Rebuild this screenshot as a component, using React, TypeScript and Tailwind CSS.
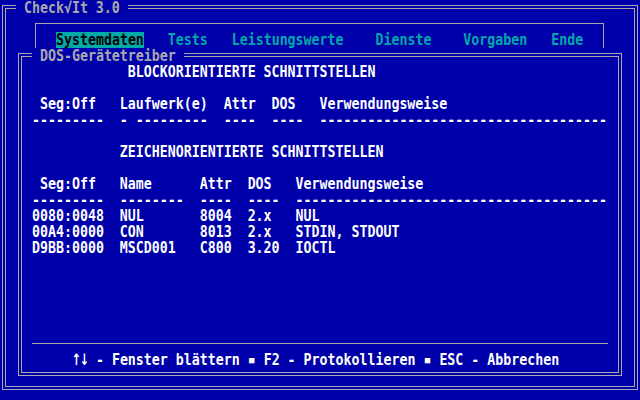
import React from "react";

function Row({ children, className = "" }: { children?: React.ReactNode; className?: string }) {
  return (
    <div className={"h-4 leading-4 whitespace-pre " + className}>
      <span className="inline-block scale-y-[1.13]">{children}</span>
    </div>
  );
}

function Blank() {
  return <div className="h-4" />;
}

function Arrow({ c }: { c: string }) {
  return (
    <span className="inline-flex w-2 h-4 justify-center items-center align-top">
      <span className="inline-block font-['DejaVu_Sans',sans-serif] text-[15px] leading-4 scale-x-[0.75] scale-y-[1.05]">{c}</span>
    </span>
  );
}

function Sq() {
  return (
    <span className="inline-flex w-2 h-4 justify-center items-center align-top">
      <span className="inline-block text-[9px] leading-4">■</span>
    </span>
  );
}

export default function App() {
  return (
    <div className="w-[640px] h-[400px] bg-[#0000aa] overflow-hidden pt-[5px] pl-[2px] font-['DejaVu_Sans_Mono',monospace] text-[13.288px] leading-4 font-bold text-white">
      <div className="relative w-[636px] h-[385px] border-4 border-double border-[#aaaaaa]">
        <div className="absolute left-[10px] -top-[9px] h-4 leading-4 whitespace-pre bg-[#0000aa] text-[#aaaaaa]">
          <span className="inline-block scale-y-[1.13]"> Check√It 3.0 </span>
        </div>

        <div className="ml-[29px] mt-[14px] w-[569px] h-[25px] border-x border-t border-[#aaaaaa] pt-2 pl-[20px]">
          <div className="h-4 leading-4 whitespace-pre text-[#00aaaa] flex">
            <span className="inline-block h-4 bg-[#00aaaa] text-black">
              <span className="inline-block scale-y-[1.13]">Systemdaten</span>
            </span>
            <span className="inline-block scale-y-[1.13]">{"   Tests   Leistungswerte    Dienste    Vorgaben   Ende"}</span>
          </div>
        </div>

        <div className="relative ml-[12px] mt-[5px] w-[604px] h-[323px] border-4 border-double border-[#aaaaaa] pt-[7px] pl-[10px]">
          <div className="absolute left-[10px] -top-[9px] h-4 leading-4 whitespace-pre bg-[#0000aa] text-[#aaaaaa]">
            <span className="inline-block scale-y-[1.13]"> DOS-Gerätetreiber </span>
          </div>

          <Row>{"            BLOCKORIENTIERTE SCHNITTSTELLEN"}</Row>
          <Blank />
          <Row>{" Seg:Off   Laufwerk(e)  Attr  DOS   Verwendungsweise"}</Row>
          <Row>{"---------  - ---------  ----  ----  ------------------------------------"}</Row>
          <Blank />
          <Row>{"           ZEICHENORIENTIERTE SCHNITTSTELLEN"}</Row>
          <Blank />
          <Row>{" Seg:Off   Name      Attr  DOS   Verwendungsweise"}</Row>
          <Row>{"---------  --------  ----  ----  ---------------------------------------"}</Row>
          <Row>{"0080:0048  NUL       8004  2.x   NUL"}</Row>
          <Row>{"00A4:0000  CON       8013  2.x   STDIN, STDOUT"}</Row>
          <Row>{"D9BB:0000  MSCD001   C800  3.20  IOCTL"}</Row>
          <Blank />
          <Blank />
          <Blank />
          <Blank />
          <Blank />
          <div className="h-4 pt-[7px]">
            <div className="w-[576px] h-px bg-[#aaaaaa]" />
          </div>
          <div className="h-4 leading-4 whitespace-pre flex">
            <span>{"     "}</span>
            <Arrow c="↑" />
            <Arrow c="↓" />
            <span className="inline-block scale-y-[1.13]">{" - Fenster blättern "}</span>
            <Sq />
            <span className="inline-block scale-y-[1.13]">{" F2 - Protokollieren "}</span>
            <Sq />
            <span className="inline-block scale-y-[1.13]">{" ESC - Abbrechen"}</span>
          </div>
        </div>
      </div>
    </div>
  );
}
